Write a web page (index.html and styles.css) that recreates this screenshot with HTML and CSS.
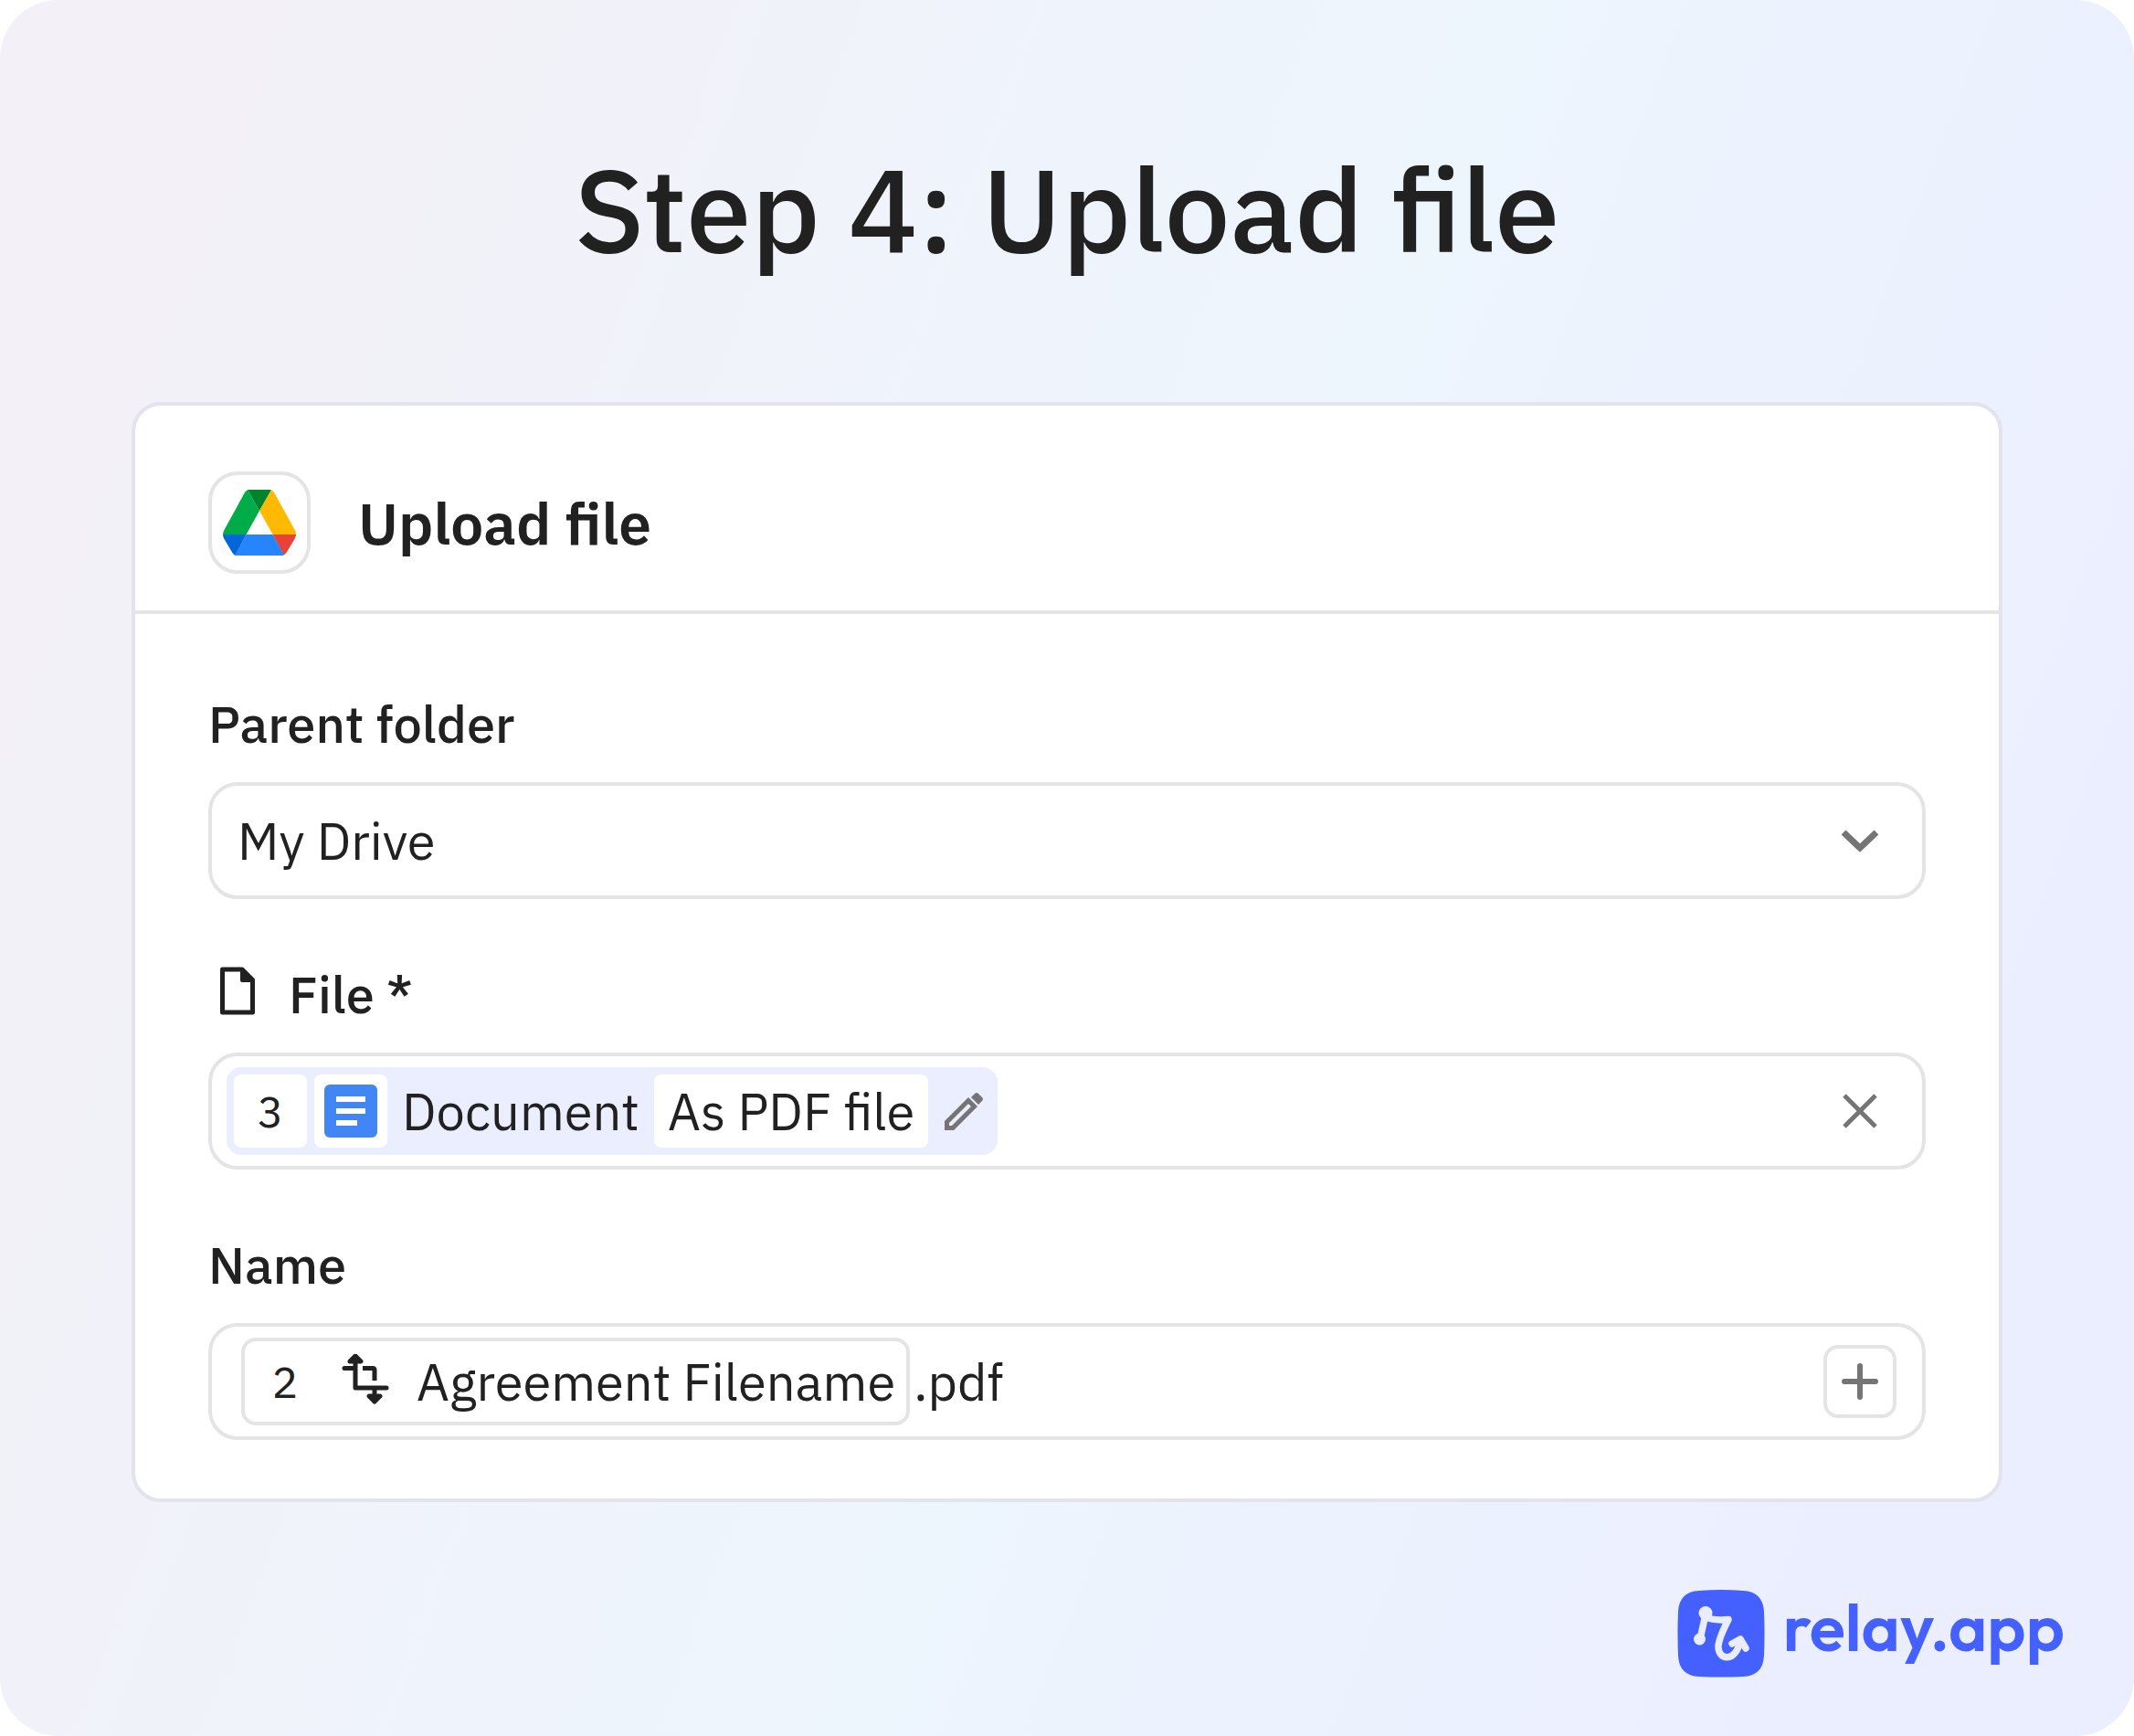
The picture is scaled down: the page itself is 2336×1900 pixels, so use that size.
FILE: index.html
```html
<!DOCTYPE html>
<html lang="en">
  <head>
    <meta charset="UTF-8" />
    <meta name="viewport" content="width=device-width, initial-scale=1.0" />
    <title>Step 4: Upload file</title>
    <link rel="stylesheet" href="styles.css">
  </head>
  <body>
    <main class="slide">
      <h1>Step 4: Upload file</h1>

      <form class="card">
        <!-- Card header -->
        <header class="card-header">
          <span class="app-icon">
            <svg viewBox="0 0 80 72" width="80" height="72" aria-hidden="true">
              <path fill="#0066da" d="M0 49h25.500L13.500 72c-1.300-.7-2.400-1.800-3.200-3.200L1.200 53.600C.4 52.200 0 50.600 0 49z" />
              <path fill="#00ac47" d="M40 23 27 0.200c-1.300.7-2.400 1.700-3.200 3.100L1.200 44.400C.4 45.800 0 47.400 0 49h25.500z" />
              <path fill="#ea4335" d="M66.500 71.500c1.300-.7 2.400-1.700 3.200-3.100L78.800 53.600c.8-1.400 1.200-3 1.200-4.600H54.500l12 22.500z" />
              <path fill="#00832d" d="M40 23 53 0.200C51.800-.1 50.800 0 49 0H31c-1.800 0-2.800-.1-4 .2z" />
              <path fill="#2684fc" d="M54.500 49h-29L13 71.500c1.200.4 2.200.5 4 .5h46c1.800 0 2.800-.1 4-.5z" />
              <path fill="#ffba00" d="M79 44.400 56.200 3.300C55.400 1.900 54.300.9 53 .2L40 23l14.500 26H80c0-1.600-.2-3.200-1-4.600z" />
            </svg>
          </span>
          <h2>Upload file</h2>
        </header>

        <div class="card-body">
          <!-- Parent folder -->
          <div class="group">
            <label class="label" for="folder">Parent folder</label>
            <div class="field">
              <select id="folder">
                <option>My Drive</option>
              </select>
              <svg class="chevron" viewBox="0 0 80 80" width="80" height="80" fill="none" stroke="#757575" stroke-width="7" aria-hidden="true">
                <path d="M22 31 40 48 58 31" />
              </svg>
            </div>
          </div>

          <!-- File -->
          <div class="group">
            <div class="label">
              <svg viewBox="0 0 64 64" width="64" height="64" aria-hidden="true">
                <path fill="none" stroke="#212121" stroke-width="5" stroke-linejoin="round" d="M16 5h21L48.500 16.500V52h-33V5z" />
                <path fill="#212121" d="M35 3h3l12 12v4H37q-2 0-2-2z" />
              </svg>
              File *
            </div>
            <div class="field field-file">
              <div class="chip chip-file">
                <span class="box number">3</span>
                <span class="box">
                  <svg viewBox="0 0 58 58" width="58" height="58" aria-hidden="true">
                    <rect width="58" height="58" rx="6" fill="#4285f4" />
                    <path fill="#fff" d="M13 13h32v6H13zM13 26h32v6H13zM13 39h23v6H13z" />
                  </svg>
                </span>
                <span class="chip-text">Document</span>
                <span class="box format">As PDF file</span>
                <button class="icon-button edit" type="button" aria-label="Edit">
                  <svg viewBox="-1 0 56 56" width="56" height="56" aria-hidden="true">
                    <path fill="none" stroke="#757575" stroke-width="5" d="M9.500 46.500v-6.500L33 16.500 39.500 23 16 46.500z" />
                    <path fill="#757575" d="M36 13l4-4q2-2 4 0l4 4q2 2 0 4l-4 4z" />
                  </svg>
                </button>
              </div>
              <button class="icon-button" type="button" aria-label="Clear">
                <svg viewBox="0 0 80 80" width="80" height="80" fill="none" stroke="#757575" stroke-width="5" aria-hidden="true">
                  <path d="M23 23 57 57M57 23 23 57" />
                </svg>
              </button>
            </div>
          </div>

          <!-- Name -->
          <div class="group">
            <div class="label">Name</div>
            <div class="field field-name">
              <div class="chip chip-name">
                <span class="box number">2</span>
                <span class="box">
                  <svg viewBox="0 4 56 60" width="56" height="60" fill="none" stroke="#212121" stroke-width="5" stroke-linecap="round" stroke-linejoin="round" aria-hidden="true">
                    <path d="M17 6v35h34M5 19.500h9M11 12l6-6 6 6zM32 50l6 6 6-6zM38 43v13" />
                    <path stroke-linecap="butt" d="M25 19.500h11q2 0 2 2V33" />
                  </svg>
                </span>
                <span class="chip-text">Agreement Filename</span>
              </div>
              <span>.pdf</span>
              <button class="icon-button add" type="button" aria-label="Add">
                <svg viewBox="0 0 40 40" width="40" height="40" fill="none" stroke="#757575" stroke-width="6" stroke-linecap="round" aria-hidden="true">
                  <path d="M20 3v34M3 20h34" />
                </svg>
              </button>
            </div>
          </div>
        </div>
      </form>

      <footer class="brand">
        <svg viewBox="0 0 96 96" width="96" height="96" aria-hidden="true">
          <path fill="#4461ff" d="M24 1Q48-1 72 1 94 2 95 24q1 24 0 48-1 22-23 23-24 1-48 0Q2 94 1 72 0 48 1 24 2 2 24 1z" />
          <g fill="none" stroke="#eaedff" stroke-width="7.500" stroke-linecap="round" stroke-linejoin="round">
            <path d="M25 54 31 27M32 30q8 4 24 2.500Q46 52 45 61c-1 17 20 19 24-6" />
            <path d="M60 59 69 54 75 64" />
          </g>
          <circle cx="31" cy="25.500" r="7.500" fill="#eaedff" />
          <circle cx="24.500" cy="54" r="6.500" fill="#eaedff" />
        </svg>
        <span>relay.app</span>
      </footer>
    </main>
  </body>
</html>
```

FILE: styles.css
```css
:root {
  --text: #212121;
  --line: #e4e4e4;
  --card-line: #e2e3ec;
  --tint: #ebeeff;
  --brand: #4461ff;
}

* {
  box-sizing: border-box;
}

body {
  margin: 0;
  background: #fff;
  color: var(--text);
  font-family: "IBM Plex Sans", "Noto Sans", sans-serif;
}

.slide {
  min-height: 100vh;
  padding: 140px 144px 60px;
  border-radius: 64px;
  background: linear-gradient(111deg, #f4f0f7 4%, #edf5fd 54%, #ebeeff 88%);
}

h1 {
  margin: 0 0 124px;
  font-size: 128px;
  font-weight: 500;
  line-height: 176px;
  text-align: center;
}

/* Card */
.card {
  border: 4px solid var(--card-line);
  border-radius: 32px;
  background: #fff;
}

.card-header {
  display: flex;
  align-items: center;
  gap: 52px;
  padding: 72px 80px 40px;
  border-bottom: 4px solid var(--line);
}

.app-icon {
  display: flex;
  align-items: center;
  justify-content: center;
  width: 112px;
  height: 112px;
  border: 4px solid var(--line);
  border-radius: 32px;
}

h2 {
  margin: 0;
  font-size: 64px;
  font-weight: 600;
  line-height: 80px;
}

.card-body {
  display: flex;
  flex-direction: column;
  gap: 68px;
  padding: 84px 80px 64px;
}

.group {
  display: flex;
  flex-direction: column;
  gap: 28px;
}

.label {
  display: flex;
  align-items: center;
  gap: 24px;
  font-size: 56px;
  font-weight: 500;
  line-height: 72px;
}

.field {
  position: relative;
  display: flex;
  align-items: center;
  height: 128px;
  padding: 0 28px;
  border: 4px solid var(--line);
  border-radius: 32px;
  font-size: 56px;
  line-height: 72px;
}

.field-file {
  padding-left: 16px;
}

.field-name {
  gap: 4px;
  padding-left: 32px;
}

select {
  flex: 1;
  height: 100%;
  padding: 0;
  border: 0;
  background: none;
  color: inherit;
  font: inherit;
  appearance: none;
}

.chevron {
  position: absolute;
  right: 28px;
  pointer-events: none;
}

/* Chips */
.chip {
  display: flex;
  align-items: center;
  gap: 8px;
  height: 96px;
  border-radius: 16px;
}

.chip-file {
  padding: 0 8px;
  background: var(--tint);
}

.chip-name {
  padding: 0 4px;
  border: 4px solid var(--line);
}

.box {
  display: flex;
  align-items: center;
  justify-content: center;
  width: 80px;
  height: 80px;
  border-radius: 8px;
  background: #fff;
}

.number {
  font-size: 48px;
}

.chip-text {
  padding: 0 8px;
}

.format {
  width: auto;
  padding: 0 15px;
}

.icon-button {
  display: flex;
  align-items: center;
  justify-content: center;
  width: 80px;
  height: 80px;
  margin-left: auto;
  padding: 0;
  border: 0;
  border-radius: 16px;
  background: none;
}

.edit {
  width: 60px;
}

.add {
  border: 4px solid var(--line);
}

/* Logo */
.brand {
  display: flex;
  align-items: flex-start;
  justify-content: flex-end;
  gap: 20px;
  margin: 96px -68px 0 0;
  color: var(--brand);
  font-family: Outfit, Lato, sans-serif;
  font-size: 72px;
  font-weight: 600;
  line-height: 82px;
}
```
